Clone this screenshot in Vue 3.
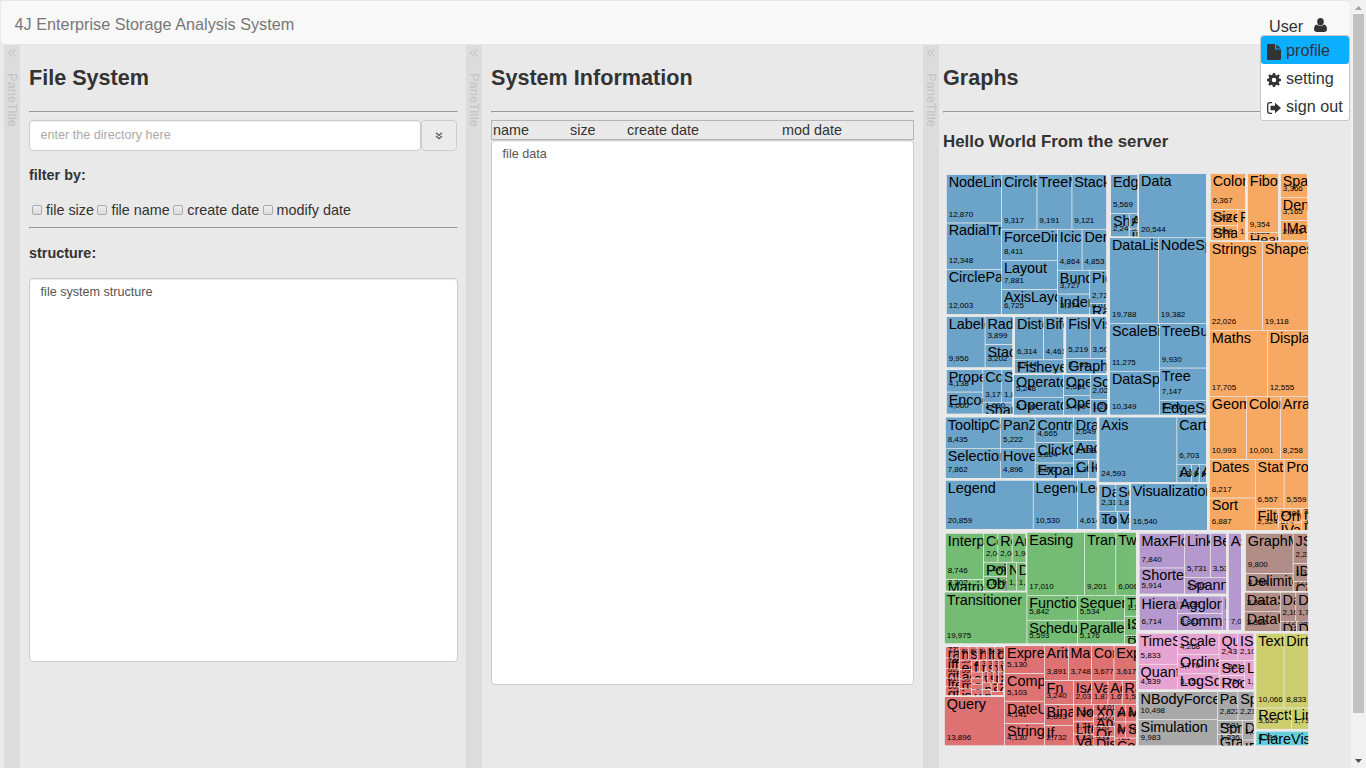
<script setup>
const flare = {
  analytics: {
    cluster: { AgglomerativeCluster: 3938, CommunityStructure: 3812, HierarchicalCluster: 6714, MergeEdge: 743 },
    graph: { BetweennessCentrality: 3534, LinkDistance: 5731, MaxFlowMinCut: 7840, ShortestPaths: 5914, SpanningTree: 3416 },
    optimization: { AspectRatioBanker: 7074 }
  },
  animate: {
    Easing: 17010, FunctionSequence: 5842,
    interpolate: { ArrayInterpolator: 1983, ColorInterpolator: 2047, DateInterpolator: 1375, Interpolator: 8746, MatrixInterpolator: 2202, NumberInterpolator: 1382, ObjectInterpolator: 1629, PointInterpolator: 1675, RectangleInterpolator: 2042 },
    ISchedulable: 1041, Parallel: 5176, Pause: 449, Scheduler: 5593, Sequence: 5534, Transition: 9201, Transitioner: 19975, TransitionEvent: 1116, Tween: 6006
  },
  data: {
    converters: { Converters: 721, DelimitedTextConverter: 4294, GraphMLConverter: 9800, IDataConverter: 1314, JSONConverter: 2220 },
    DataField: 1759, DataSchema: 2165, DataSet: 586, DataSource: 3331, DataTable: 772, DataUtil: 3322
  },
  display: { DirtySprite: 8833, LineSprite: 1732, RectSprite: 3623, TextSprite: 10066 },
  flex: { FlareVis: 4116 },
  physics: { DragForce: 1082, GravityForce: 1336, IForce: 319, NBodyForce: 10498, Particle: 2822, Simulation: 9983, Spring: 2213, SpringForce: 1681 },
  query: {
    AggregateExpression: 1616, And: 1027, Arithmetic: 3891, Average: 891, BinaryExpression: 2893, Comparison: 5103, CompositeExpression: 3677, Count: 781, DateUtil: 4141, Distinct: 933, Expression: 5130, ExpressionIterator: 3617, Fn: 3240, If: 2732, IsA: 2039, Literal: 1214, Match: 3748, Maximum: 843,
    methods: { add: 593, and: 330, average: 287, count: 277, distinct: 292, div: 595, eq: 594, fn: 460, gt: 603, gte: 625, iff: 748, isa: 461, lt: 597, lte: 619, max: 283, min: 283, mod: 591, mul: 603, neq: 599, not: 386, or: 323, orderby: 307, range: 772, select: 296, stddev: 363, sub: 600, sum: 280, update: 307, variance: 335, where: 299, xor: 354, _: 264 },
    Minimum: 843, Not: 1554, Or: 970, Query: 13896, Range: 1594, StringUtil: 4130, Sum: 791, Variable: 1124, Variance: 1876, Xor: 1101
  },
  scale: { IScaleMap: 2105, LinearScale: 1316, LogScale: 3151, OrdinalScale: 3770, QuantileScale: 2435, QuantitativeScale: 4839, RootScale: 1756, Scale: 4268, ScaleType: 1821, TimeScale: 5833 },
  util: {
    Arrays: 8258, Colors: 10001, Dates: 8217, Displays: 12555, Filter: 2324, Geometry: 10993,
    heap: { FibonacciHeap: 9354, HeapNode: 1233 },
    IEvaluable: 335, IPredicate: 383, IValueProxy: 874,
    math: { DenseMatrix: 3165, IMatrix: 2815, SparseMatrix: 3366 },
    Maths: 17705, Orientation: 1486,
    palette: { ColorPalette: 6367, Palette: 1229, ShapePalette: 2059, SizePalette: 2291 },
    Property: 5559, Shapes: 19118, Sort: 6887, Stats: 6557, Strings: 22026
  },
  vis: {
    axis: { Axes: 1302, Axis: 24593, AxisGridLine: 652, AxisLabel: 636, CartesianAxes: 6703 },
    controls: { AnchorControl: 2138, ClickControl: 3824, Control: 1353, ControlList: 4665, DragControl: 2649, ExpandControl: 2832, HoverControl: 4896, IControl: 763, PanZoomControl: 5222, SelectionControl: 7862, TooltipControl: 8435 },
    data: {
      Data: 20544, DataList: 19788, DataSprite: 10349, EdgeSprite: 3301, NodeSprite: 19382,
      render: { ArrowType: 698, EdgeRenderer: 5569, IRenderer: 353, ShapeRenderer: 2247 },
      ScaleBinding: 11275, Tree: 7147, TreeBuilder: 9930
    },
    events: { DataEvent: 2313, SelectionEvent: 1880, TooltipEvent: 1701, VisualizationEvent: 1117 },
    legend: { Legend: 20859, LegendItem: 4614, LegendRange: 10530 },
    operator: {
      distortion: { BifocalDistortion: 4461, Distortion: 6314, FisheyeDistortion: 3444 },
      encoder: { ColorEncoder: 3179, Encoder: 4060, PropertyEncoder: 4138, ShapeEncoder: 1690, SizeEncoder: 1830 },
      filter: { FisheyeTreeFilter: 5219, GraphDistanceFilter: 3165, VisibilityFilter: 3509 },
      IOperator: 1286,
      label: { Labeler: 9956, RadialLabeler: 3899, StackedAreaLabeler: 3202 },
      layout: { AxisLayout: 6725, BundledEdgeRouter: 3727, CircleLayout: 9317, CirclePackingLayout: 12003, DendrogramLayout: 4853, ForceDirectedLayout: 8411, IcicleTreeLayout: 4864, IndentedTreeLayout: 3174, Layout: 7881, NodeLinkTreeLayout: 12870, PieLayout: 2728, RadialTreeLayout: 12348, RandomLayout: 870, StackedAreaLayout: 9121, TreeMapLayout: 9191 },
      Operator: 2490, OperatorList: 5248, OperatorSequence: 4190, OperatorSwitch: 2581, SortOperator: 2023
    },
    Visualization: 16540
  }
}

const palette = {
  vis: '#1f77b4', util: '#ff7f0e', animate: '#2ca02c', query: '#d62728', analytics: '#9467bd',
  data: '#8c564b', scale: '#e377c2', physics: '#7f7f7f', display: '#bcbd22', flex: '#17becf'
}

const WIDTH = 367
const HEIGHT = 578
const LAYOUT = { x0: 0, y0: 0, x1: 367.6, y1: 575.4 }
const VIEW = { x0: -0.15, y0: 1.1, x1: 367, y1: 577.3 }
const SX = (VIEW.x1 - VIEW.x0) / LAYOUT.x1
const SY = (VIEW.y1 - VIEW.y0) / LAYOUT.y1
const PAD = 1
const BLEED = 0.25
const PHI = (1 + Math.sqrt(5)) / 2

function build(name, content, color) {
  if (typeof content === 'number') return { name, value: content, height: 0, color }
  const children = Object.entries(content).map(([key, v]) => build(key, v, color || palette[key]))
  children.sort((a, b) => b.height - a.height || b.value - a.value)
  return {
    name, color, children,
    value: children.reduce((s, c) => s + c.value, 0),
    height: 1 + Math.max(...children.map(c => c.height))
  }
}

function fillRow(row, sum, horizontal, x0, y0, x1, y1) {
  for (const n of row) {
    if (horizontal) {
      const w = (x1 - x0) * n.value / sum
      Object.assign(n, { x0, y0, x1: x0 + w, y1 })
      x0 += w
    } else {
      const h = (y1 - y0) * n.value / sum
      Object.assign(n, { x0, y0, x1, y1: y0 + h })
      y0 += h
    }
    sum -= n.value
  }
}

function squarify(node, x0, y0, x1, y1) {
  let value = node.value
  let i = 0
  const nodes = node.children
  while (i < nodes.length) {
    const dx = x1 - x0
    const dy = y1 - y0
    let j = i + 1
    let sum = nodes[i].value
    let min = sum
    let max = sum
    const alpha = Math.max(dy / dx, dx / dy) / (value * PHI)
    let beta = sum * sum * alpha
    let best = Math.max(max / beta, beta / min)
    for (; j < nodes.length; j++) {
      const v = nodes[j].value
      sum += v
      min = Math.min(min, v)
      max = Math.max(max, v)
      beta = sum * sum * alpha
      const score = Math.max(max / beta, beta / min)
      if (score > best) { sum -= v; break }
      best = score
    }
    const row = nodes.slice(i, j)
    if (dx < dy) {
      const bottom = y0 + dy * sum / value
      fillRow(row, sum, true, x0, y0, x1, bottom)
      y0 = bottom
    } else {
      const right = x0 + dx * sum / value
      fillRow(row, sum, false, x0, y0, right, y1)
      x0 = right
    }
    value -= sum
    i = j
  }
}

const leaves = []
function place(node, inset) {
  node.x0 += inset
  node.y0 += inset
  node.x1 -= inset
  node.y1 -= inset
  if (node.x1 < node.x0) node.x0 = node.x1 = (node.x0 + node.x1) / 2
  if (node.y1 < node.y0) node.y0 = node.y1 = (node.y0 + node.y1) / 2
  if (!node.children) {
    leaves.push({
      name: node.name, value: node.value, color: node.color,
      x: VIEW.x0 + node.x0 * SX - BLEED, y: VIEW.y0 + node.y0 * SY - BLEED,
      w: (node.x1 - node.x0) * SX + 2 * BLEED, h: (node.y1 - node.y0) * SY + 2 * BLEED
    })
    return
  }
  const p = PAD / 2
  squarify(node, node.x0 + p, node.y0 + p, node.x1 - p, node.y1 - p)
  node.children.forEach(c => place(c, p))
}
place(Object.assign(build('flare', flare), LAYOUT), 0)

const format = v => v.toLocaleString('en-US')
const filters = ['file size', 'file name', 'create date', 'modify date']
</script>

<template>
  <div class="screen">
    <div class="page">
      <header class="navbar">
        <span class="brand">4J Enterprise Storage Analysis System</span>
        <div class="user">
          <span>User</span>
          <svg class="person" viewBox="0 0 13 14"><ellipse cx="6.5" cy="3.7" rx="3.3" ry="3.7" /><path d="M3 6.400Q0 7 0 11.500Q0 13.900 2.500 13.900H10.500Q13 13.900 13 11.500Q13 7 10 6.400Q6.500 9.600 3 6.400Z" /></svg>
          <ul class="menu">
            <li class="active">
              <svg viewBox="0 0 14 16"><path d="M0 1Q0 0 1 0H8V5.500H14V15Q14 16 13 16H1Q0 16 0 15ZM9.300 0.300L13.700 4.400H9.300Z" /></svg>profile
            </li>
            <li>
              <svg viewBox="0 0 14 14"><path fill-rule="evenodd" d="M5.900 0H8.100L8.500 1.900L9.800 2.400L11.400 1.300L12.800 2.700L11.700 4.300L12.200 5.500L14 5.900V8.100L12.200 8.500L11.700 9.700L12.800 11.300L11.300 12.800L9.700 11.700L8.500 12.200L8.100 14H5.900L5.500 12.200L4.300 11.700L2.700 12.800L1.200 11.300L2.300 9.700L1.800 8.500L0 8.100V5.900L1.800 5.500L2.300 4.300L1.200 2.700L2.700 1.200L4.300 2.300L5.500 1.800ZM7 4.700A2.300 2.300 0 1 0 7 9.300A2.300 2.300 0 1 0 7 4.700Z" /></svg>setting
            </li>
            <li>
              <svg viewBox="0 0 14 14"><path d="M5 1.700H3Q.700 1.700 .700 4V10Q.700 12.300 3 12.300H5" fill="none" stroke="#333" stroke-width="1.300" /><path d="M3.500 4.800H8V1.800L14 7L8 12.200V9.200H3.500Z" /></svg>sign out
            </li>
          </ul>
        </div>
      </header>

      <main class="panes">
        <aside class="bar">
          <svg viewBox="0 0 8 8"><path d="M4 .5L.7 4L4 7.500M7.500 .5L4.200 4L7.500 7.500" /></svg>
          <span>PaneTitle</span>
        </aside>
        <section class="pane files">
          <h2>File System</h2>
          <hr>
          <div class="search">
            <input class="field" type="text" placeholder="enter the directory here">
            <button class="go"><svg viewBox="0 0 8 8"><path d="M1 .7L4 3.500L7 .7M1 4L4 6.800L7 4" /></svg></button>
          </div>
          <h4 class="filter-title">filter by:</h4>
          <div class="filters">
            <label v-for="f in filters" :key="f"><i class="box"></i>{{ f }}</label>
          </div>
          <hr>
          <h4 class="structure-title">structure:</h4>
          <div class="area structure">file system structure</div>
        </section>

        <aside class="bar">
          <svg viewBox="0 0 8 8"><path d="M4 .5L.7 4L4 7.500M7.500 .5L4.200 4L7.500 7.500" /></svg>
          <span>PaneTitle</span>
        </aside>
        <section class="pane info">
          <h2>System Information</h2>
          <hr>
          <div class="columns"><span>name</span><span>size</span><span>create date</span><span>mod date</span></div>
          <div class="area data">file data</div>
        </section>

        <aside class="bar">
          <svg viewBox="0 0 8 8"><path d="M4 .5L.7 4L4 7.500M7.500 .5L4.200 4L7.500 7.500" /></svg>
          <span>PaneTitle</span>
        </aside>
        <section class="pane graphs">
          <h2>Graphs</h2>
          <hr>
          <h3>Hello World From the server</h3>
          <svg class="treemap" :width="WIDTH" :height="HEIGHT">
            <svg v-for="(n, i) in leaves" :key="i" :x="n.x" :y="n.y" :width="n.w" :height="n.h" class="cell">
              <rect width="100%" height="100%" :fill="n.color" fill-opacity=".62" />
              <text class="name" x="2.100" y="12.200">{{ n.name }}</text>
              <text class="size" x="2.100" :y="n.h - 6">{{ format(n.value) }}</text>
            </svg>
          </svg>
        </section>
      </main>
    </div>
    <div class="scrollbar">
      <svg viewBox="0 0 15 14"><path d="M4 10L7.500 6L11 10Z" fill="#a3a3a3" /></svg>
      <div class="thumb"></div>
      <svg class="down" viewBox="0 0 15 14"><path d="M4 5L7.500 9L11 5Z" fill="#505050" /></svg>
    </div>
  </div>
</template>

<style>
body { background: #e9e9e9; overflow: hidden; }
</style>

<style scoped>
* { box-sizing: border-box; }
.screen { display: flex; height: 768px; overflow: hidden; background: #e9e9e9; color: #333; font: 14.4px/20px "Liberation Sans", Arial, sans-serif; }
.page { width: 1351px; padding: 0 0 0 1px; display: flex; flex-direction: column; }
.navbar { flex: none; height: 45px; margin-right: 1px; background: #f8f8f8; border: 1px solid #e7e7e7; border-left: 0; border-right: 0; border-radius: 4px; display: flex; justify-content: space-between; font-size: 16.2px; }
.brand { margin: 13px 0 0 13.600px; color: #777; letter-spacing: .02px; }
.user { position: relative; width: 89px; padding: 15px 0 0 8px; display: flex; align-items: flex-start; }
.person { width: 13px; height: 14px; margin: 2px 0 0 11px; fill: #333; }
.menu { position: absolute; z-index: 2; top: 34px; left: -1px; width: 90px; height: 86px; margin: 0; padding: 0; list-style: none; background: #fff; border: 1px solid #c8c8c8; border-radius: 3px; }
.menu li { height: 28px; padding-left: 6px; display: flex; align-items: center; white-space: nowrap; border-radius: 3px; }
.menu svg { width: 14px; height: 16px; margin: 3px 5px 0 0; fill: #333; }
.menu li + li svg { margin-top: 4px; }
.menu .active { background: #0caeff; }
.panes { flex: 1; display: flex; min-height: 0; padding-left: 3px; }
.bar { flex: none; width: 16px; background: #dcdcdc; color: #c3c3c3; font-size: 12.900px; display: flex; flex-direction: column; align-items: center; }
.bar svg { width: 8px; height: 8px; margin-top: 3.500px; fill: none; stroke: #bbb; stroke-width: 1; }
.bar span { writing-mode: vertical-rl; margin-top: 16.500px; line-height: 16px; }
.pane { flex: none; }
.files { width: 446px; padding: 0 8px 0 9px; }
.info { width: 441px; padding: 0 9px; }
.graphs { width: 412px; padding-left: 4px; }
h2, h3, h4 { margin: 0; }
h2 { height: 66px; padding-top: 20px; font-size: 21.600px; line-height: 25px; }
hr { height: 2px; margin: 0; border: 1px solid #999; border-right-color: #eee; border-bottom-color: #eee; }
h3 { margin-top: 19px; font-size: 16.850px; line-height: 20px; }
h4 { font-size: 14.400px; line-height: 20px; }
.search { display: flex; height: 31px; margin-top: 7px; }
.field { width: 392px; height: 31px; padding: 0 11px 1px 10.600px; border: 1px solid #ccc; border-radius: 4px; font: 12.600px "Liberation Sans", Arial, sans-serif; background: #fff; box-shadow: inset 0 1px 1px rgba(0, 0, 0, .075); }
.field::placeholder { color: #aaa; }
.go { width: 36px; padding: 0; border: 1px solid #ccc; border-radius: 4px; background: #ebebeb; }
.go svg { width: 8px; height: 8px; fill: none; stroke: #555; stroke-width: 1.200; }
.filter-title { margin-top: 14px; }
.filters { display: flex; margin: 15px 0 7px 3px; height: 20px; }
.filters label { display: flex; align-items: center; margin-right: 3.400px; }
.box { width: 10px; height: 10px; margin-right: 4px; border: 1px solid #aaa; border-radius: 2px; background: linear-gradient(#eee, #dcdcdc); }
.structure-title { margin-top: 14px; }
.area { background: #fff; border: 1px solid #ccc; border-radius: 4px; box-shadow: inset 0 1px 1px rgba(0, 0, 0, .075); color: #555; font-size: 12.600px; line-height: 18px; padding: 4px 11px 4px 10.600px; }
.structure { height: 384px; margin-top: 15px; }
.columns { height: 20px; margin-top: 7px; border: 1px solid #b5b5b5; display: grid; grid-template-columns: 77px 57px 155px 1fr; padding-left: 1px; line-height: 18px; }
.data { height: 545px; }
.treemap { display: block; margin-top: 18px; overflow: visible; }
.cell { overflow: hidden; }
.treemap text { fill: #000; }
.name { font-size: 14.400px; }
.size { font-size: 8px; }
.scrollbar { width: 15px; background: #f1f1f1; display: flex; flex-direction: column; }
.scrollbar svg { width: 15px; height: 14px; }
.thumb { width: 11px; height: 699px; margin-left: 2px; background: #c1c1c1; }
.down { margin-top: auto; }
</style>
